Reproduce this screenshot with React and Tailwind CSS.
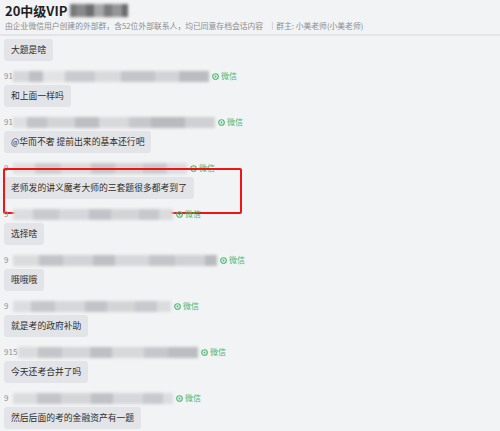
const messages = [
  { id: 2, prefix: '91', text: '和上面一样吗', blur: [[16, '#d6d7da'], [14, '#bfc0c3'], [22, '#e2e3e5'], [30, '#c9cacd'], [26, '#d9dadc'], [34, '#c4c5c8'], [24, '#d2d3d6'], [30, '#bbbcbf']] },
  { id: 3, prefix: '91', text: '@华而不奢  提前出来的基本还行吧', blur: [[14, '#dedfe1'], [20, '#c3c4c7'], [28, '#d3d4d6'], [24, '#bdbec1'], [30, '#d8d9db'], [22, '#c6c7ca'], [34, '#b9babd'], [30, '#cfd0d3']] },
  { id: 4, prefix: '9', text: '老师发的讲义魔考大师的三套题很多都考到了', blur: [[22, '#dfe0e2'], [26, '#cbccce'], [30, '#d9dadc'], [24, '#c5c6c9'], [28, '#d4d5d7'], [24, '#c8c9cc'], [20, '#dcdde0']], boxed: true },
  { id: 5, prefix: '9', text: '选择啥', blur: [[20, '#dcdde0'], [26, '#c9cacd'], [30, '#d6d7da'], [22, '#c2c3c6'], [28, '#d3d4d6'], [20, '#c7c8cb'], [14, '#dadbdd']] },
  { id: 6, prefix: '9', text: '哦哦哦', blur: [[26, '#dadbdd'], [24, '#c2c3c6'], [30, '#d2d3d6'], [22, '#bfc0c3'], [34, '#d6d7da'], [26, '#c4c5c8'], [30, '#d0d1d4'], [12, '#babbbe']] },
  { id: 7, prefix: '9', text: '就是考的政府补助', blur: [[18, '#dcdde0'], [24, '#c6c7ca'], [30, '#d6d7da'], [22, '#c2c3c6'], [28, '#d3d4d6'], [22, '#c8c9cc'], [14, '#dbdcde']] },
  { id: 8, prefix: '915', text: '今天还考合并了吗', blur: [[20, '#dadbdd'], [24, '#c4c5c8'], [28, '#d4d5d8'], [22, '#bebfc2'], [32, '#d7d8da'], [24, '#c6c7ca'], [30, '#bcbdc0']] },
  { id: 9, prefix: '9', text: '然后后面的考的金融资产有一题', blur: [[24, '#dbdcde'], [24, '#c4c5c8'], [30, '#d4d5d7'], [22, '#c0c1c5'], [30, '#d6d7da'], [20, '#c8c9cc'], [10, '#dcdde0']] },
];

function BlurStrip({ parts }) {
  return (
    <div className="flex h-[11px] rounded-full blur-[1.8px]">
      {parts.map(([w, c], i) => (
        <div key={i} style={{ width: w, backgroundColor: c }} className="h-full" />
      ))}
    </div>
  );
}

function WeChatTag() {
  return (
    <span className="ml-[3px] flex items-center gap-[2px] text-[8px] text-[#4cb672]">
      <svg width="7" height="7" viewBox="0 0 10 10">
        <circle cx="5" cy="5" r="4" fill="none" stroke="#4cb672" strokeWidth="1.6" />
        <circle cx="5" cy="5" r="1.4" fill="#4cb672" />
      </svg>
      微信
    </span>
  );
}

function Bubble({ text }) {
  return (
    <div className="mt-[2px] inline-flex h-[22px] w-fit items-center rounded-[3px] bg-[#e3e4e7] px-[7px] text-[8.8px] text-[#2e2e2e]">
      {text}
    </div>
  );
}

export default function App() {
  return (
    <div className="h-[431px] w-[500px] overflow-hidden bg-[#f2f3f5] font-['Noto_Sans_CJK_SC','Microsoft_YaHei',sans-serif]">
      <div className="h-[36px] border-b-2 border-[#e3e4e6] px-[5px] pt-[1px]">
        <div className="flex items-center">
          <span className="text-[13px] font-bold leading-[19px] text-[#1f1f1f]">20中级VIP</span>
          <div className="ml-[3px] flex h-[13px] blur-[1.5px]">
            <div className="w-[6px] bg-[#777]" />
            <div className="w-[10px] bg-[#8a8a8c]" />
            <div className="w-[8px] bg-[#6d6e70]" />
            <div className="w-[10px] bg-[#a6a7a9]" />
            <div className="w-[8px] bg-[#7b7c7e]" />
            <div className="w-[10px] bg-[#959698]" />
            <div className="w-[6px] bg-[#6a6b6d]" />
          </div>
        </div>
        <div className="mt-[1px] whitespace-nowrap text-[7.8px] leading-[10px] text-[#8c8c8c]">
          由企业微信用户创建的外部群，含52位外部联系人，均已同意存档会话内容&nbsp;&nbsp;&nbsp;｜群主: 小美老师(小美老师)
        </div>
      </div>

      <div className="flex flex-col gap-[8px] px-[4px] pt-[1px]">
        <Bubble text="大题是啥" />
        {messages.map((m) => (
          <div key={m.id} className="relative flex flex-col">
            <div className="flex h-[14px] items-center text-[8px] text-[#8f8f8f]">
              <span className="w-[8px] shrink-0 whitespace-nowrap">{m.prefix}</span>
              <div className={m.prefix.length > 2 ? 'ml-[6px]' : 'ml-[1px]'}>
                <BlurStrip parts={m.blur} />
              </div>
              <WeChatTag />
            </div>
            <Bubble text={m.text} />
            {m.boxed && (
              <div className="pointer-events-none absolute left-[-1px] top-[7px] h-[46px] w-[239px] rounded-[2px] border-2 border-[#f01414]" />
            )}
          </div>
        ))}
      </div>
    </div>
  );
}
